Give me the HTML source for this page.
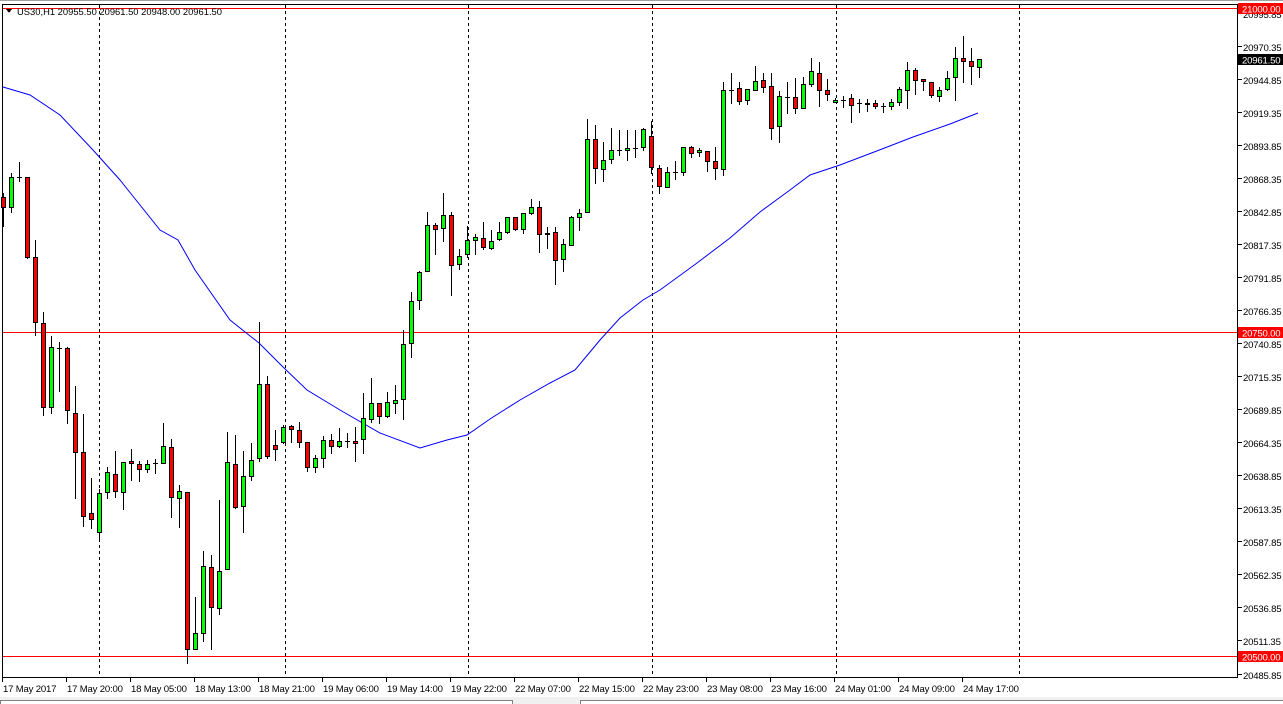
<!DOCTYPE html>
<html><head><meta charset="utf-8"><style>
html,body{margin:0;padding:0;background:#fff;}
svg{display:block;}
text{font-family:"Liberation Sans",sans-serif;font-size:9.6px;fill:#000;}
.ax text{letter-spacing:-0.2px;}
</style></head><body>
<svg id="s" width="1283" height="704" viewBox="0 0 1283 704" xmlns="http://www.w3.org/2000/svg" shape-rendering="crispEdges">
<rect x="0" y="0" width="1283" height="704" fill="#fff"/>
<line x1="0" y1="0.5" x2="1283" y2="0.5" stroke="#a0a0a0"/>
<rect x="2.5" y="4.5" width="1235" height="673" fill="none" stroke="#000"/>
<g stroke="#000" stroke-dasharray="3,3">
<line x1="99.5" y1="5" x2="99.5" y2="677"/>
<line x1="285.5" y1="5" x2="285.5" y2="677"/>
<line x1="468.5" y1="5" x2="468.5" y2="677"/>
<line x1="652.5" y1="5" x2="652.5" y2="677"/>
<line x1="836.5" y1="5" x2="836.5" y2="677"/>
<line x1="1019.5" y1="5" x2="1019.5" y2="677"/>
</g>
<line x1="3" y1="8.5" x2="1237" y2="8.5" stroke="#ff0000"/>
<line x1="3" y1="332.5" x2="1237" y2="332.5" stroke="#ff0000"/>
<line x1="3" y1="656.5" x2="1237" y2="656.5" stroke="#ff0000"/>
<polyline fill="none" stroke="#0000ff" stroke-width="1" shape-rendering="auto" points="3,87 30,95 60,115 93,150 120,180 160,230 178,240 195,270 230,320 259,343 283,367 307,390 340,410 380,433 420,448 447,440 467,435 490,419 520,400 550,383 575,370 590,352 600,340 620,318 643,300 660,290 697,263 730,238 760,212 790,190 810,175 840,165 882,149 913,137 950,124 978,113"/>
<g id="c"></g>
<path d="M6,9 L12,9 L9,13 Z" fill="#000"/>
<text x="17" y="15" textLength="205" lengthAdjust="spacingAndGlyphs">US30,H1  20955.50 20961.50 20948.00 20961.50</text>
<g stroke="#000">
<line x1="1238" y1="13.5" x2="1242" y2="13.5"/><line x1="1238" y1="46.5" x2="1242" y2="46.5"/><line x1="1238" y1="79.5" x2="1242" y2="79.5"/><line x1="1238" y1="112.5" x2="1242" y2="112.5"/><line x1="1238" y1="145.5" x2="1242" y2="145.5"/><line x1="1238" y1="178.5" x2="1242" y2="178.5"/><line x1="1238" y1="211.5" x2="1242" y2="211.5"/><line x1="1238" y1="244.5" x2="1242" y2="244.5"/><line x1="1238" y1="277.5" x2="1242" y2="277.5"/><line x1="1238" y1="310.5" x2="1242" y2="310.5"/><line x1="1238" y1="343.5" x2="1242" y2="343.5"/><line x1="1238" y1="376.5" x2="1242" y2="376.5"/><line x1="1238" y1="409.5" x2="1242" y2="409.5"/><line x1="1238" y1="442.5" x2="1242" y2="442.5"/><line x1="1238" y1="475.5" x2="1242" y2="475.5"/><line x1="1238" y1="508.5" x2="1242" y2="508.5"/><line x1="1238" y1="541.5" x2="1242" y2="541.5"/><line x1="1238" y1="574.5" x2="1242" y2="574.5"/><line x1="1238" y1="607.5" x2="1242" y2="607.5"/><line x1="1238" y1="640.5" x2="1242" y2="640.5"/><line x1="1238" y1="674.5" x2="1242" y2="674.5"/>
</g>
<g class="ax">
<text x="1243" y="18">20995.85</text><text x="1243" y="51">20970.35</text><text x="1243" y="84">20944.85</text><text x="1243" y="117">20919.35</text><text x="1243" y="150">20893.85</text><text x="1243" y="183">20868.35</text><text x="1243" y="216">20842.85</text><text x="1243" y="249">20817.35</text><text x="1243" y="282">20791.85</text><text x="1243" y="315">20766.35</text><text x="1243" y="348">20740.85</text><text x="1243" y="381">20715.35</text><text x="1243" y="414">20689.85</text><text x="1243" y="447">20664.35</text><text x="1243" y="480">20638.85</text><text x="1243" y="513">20613.35</text><text x="1243" y="546">20587.85</text><text x="1243" y="579">20562.35</text><text x="1243" y="612">20536.85</text><text x="1243" y="645">20511.35</text><text x="1243" y="679">20485.85</text>
</g>
<g class="ax">
<rect x="1238" y="3" width="45" height="11" fill="#ff0000"/><text x="1242" y="12.5" style="fill:#fff">21000.00</text>
<rect x="1238" y="54" width="45" height="11" fill="#000"/><text x="1242" y="63.5" style="fill:#fff">20961.50</text>
<rect x="1238" y="327" width="45" height="11" fill="#ff0000"/><text x="1242" y="336.5" style="fill:#fff">20750.00</text>
<rect x="1238" y="651" width="45" height="11" fill="#ff0000"/><text x="1242" y="660.5" style="fill:#fff">20500.00</text>
</g>
<g stroke="#000">
<line x1="2.5" y1="678" x2="2.5" y2="682"/><line x1="66.5" y1="678" x2="66.5" y2="682"/><line x1="130.5" y1="678" x2="130.5" y2="682"/><line x1="194.5" y1="678" x2="194.5" y2="682"/><line x1="258.5" y1="678" x2="258.5" y2="682"/><line x1="322.5" y1="678" x2="322.5" y2="682"/><line x1="386.5" y1="678" x2="386.5" y2="682"/><line x1="450.5" y1="678" x2="450.5" y2="682"/><line x1="514.5" y1="678" x2="514.5" y2="682"/><line x1="578.5" y1="678" x2="578.5" y2="682"/><line x1="642.5" y1="678" x2="642.5" y2="682"/><line x1="706.5" y1="678" x2="706.5" y2="682"/><line x1="770.5" y1="678" x2="770.5" y2="682"/><line x1="834.5" y1="678" x2="834.5" y2="682"/><line x1="898.5" y1="678" x2="898.5" y2="682"/><line x1="962.5" y1="678" x2="962.5" y2="682"/>
</g>
<g class="ax">
<text x="3" y="692">17 May 2017</text><text x="67" y="692">17 May 20:00</text><text x="131" y="692">18 May 05:00</text><text x="195" y="692">18 May 13:00</text><text x="259" y="692">18 May 21:00</text><text x="323" y="692">19 May 06:00</text><text x="387" y="692">19 May 14:00</text><text x="451" y="692">19 May 22:00</text><text x="515" y="692">22 May 07:00</text><text x="579" y="692">22 May 15:00</text><text x="643" y="692">22 May 23:00</text><text x="707" y="692">23 May 08:00</text><text x="771" y="692">23 May 16:00</text><text x="835" y="692">24 May 01:00</text><text x="899" y="692">24 May 09:00</text><text x="963" y="692">24 May 17:00</text>
</g>
<rect x="0" y="697" width="1283" height="7" fill="#f0f0f0"/>
<rect x="0.5" y="700.5" width="512" height="5" fill="#fff" stroke="#808080"/>
<rect x="580.5" y="700.5" width="703" height="5" fill="#fff" stroke="#808080"/>
</svg>
<script>
var d=[[197,207,193,226],[207,177,173,212],[177,177,162,181],[177,257,177,258],[257,322,240,335],[323,407,312,415],[407,347,336,413],[348,348,342,391],[348,410,347,423],[413,452,386,498],[452,516,414,526],[513,519,478,528],[532,493,489,541],[492,472,467,498],[474,491,451,497],[492,462,462,509],[461,463,449,480],[464,469,461,481],[469,464,460,472],[463,463,459,473],[463,446,423,463],[447,497,439,517],[498,491,485,527],[492,649,492,663],[649,633,597,649],[633,566,551,641],[567,607,555,649],[608,571,500,614],[569,462,432,569],[464,507,435,508],[506,476,451,532],[476,460,443,480],[458,384,322,461],[384,456,376,458],[445,449,430,460],[442,427,425,443],[426,429,425,442],[430,442,422,447],[442,467,442,471],[467,458,455,472],[458,440,436,467],[440,446,434,453],[446,441,428,447],[441,441,433,447],[441,443,427,461],[439,418,393,453],[419,403,378,422],[403,416,403,423],[416,402,392,417],[403,400,385,413],[399,344,330,419],[343,301,292,357],[300,272,271,309],[271,225,212,271],[225,229,223,254],[228,215,193,241],[215,265,212,295],[264,256,249,269],[254,240,226,257],[240,237,234,254],[238,247,222,249],[248,241,230,249],[239,232,222,240],[232,217,217,233],[217,229,217,230],[229,213,213,233],[213,207,199,214],[207,234,201,252],[234,233,227,248],[232,260,227,284],[259,244,239,271],[245,217,216,245],[217,213,209,230],[212,139,119,212],[139,168,125,183],[169,160,142,181],[159,150,128,163],[150,150,130,155],[150,148,130,160],[148,148,130,157],[147,129,128,150],[136,167,121,173],[168,186,165,193],[187,172,167,187],[172,172,161,179],[172,147,147,175],[147,153,146,157],[152,150,148,156],[151,161,151,171],[161,168,147,179],[169,90,82,175],[90,90,73,103],[88,101,82,104],[100,89,89,104],[90,81,66,90],[80,87,73,92],[86,128,73,139],[126,96,91,142],[97,97,82,113],[97,108,78,113],[108,84,77,108],[84,71,58,86],[73,90,62,106],[90,94,79,100],[102,100,98,102],[100,100,96,107],[98,105,94,122],[103,103,99,112],[103,104,99,111],[103,106,100,108],[106,106,103,112],[106,102,99,109],[102,89,87,105],[90,70,62,108],[70,80,68,94],[79,81,79,90],[82,95,82,97],[96,90,87,101],[89,78,71,90],[77,58,47,100],[58,61,36,82],[61,66,48,84],[67,59,59,77]];
var g=document.getElementById('c'),h='';
for(var i=0;i<d.length;i++){var cx=3+8*i,o=d[i][0],c=d[i][1],hi=d[i][2],lo=d[i][3];
h+='<line x1="'+(cx+0.5)+'" y1="'+hi+'" x2="'+(cx+0.5)+'" y2="'+(lo+1)+'" stroke="#000"/>';
if(o==c){h+='<line x1="'+(cx-2)+'" y1="'+(o+0.5)+'" x2="'+(cx+3)+'" y2="'+(o+0.5)+'" stroke="#000"/>';}
else{var t=Math.min(o,c),b=Math.max(o,c),col=c<o?'#00ff00':'#ff0000';
h+='<rect x="'+(cx-1.5)+'" y="'+(t+0.5)+'" width="4" height="'+(b-t)+'" fill="'+col+'" stroke="#000"/>';}}
g.innerHTML=h;
</script>
</body></html>
